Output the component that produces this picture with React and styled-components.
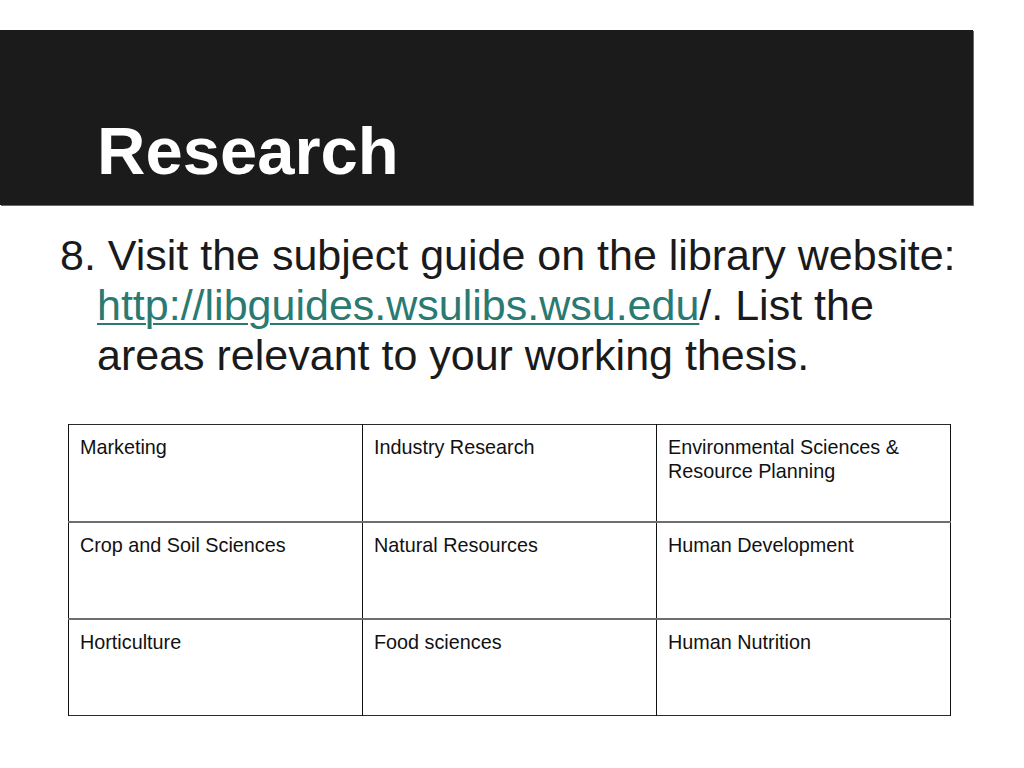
import React from "react";
import styled, { createGlobalStyle } from "styled-components";

const GlobalStyle = createGlobalStyle`
  body {
    margin: 0;
    background: #ffffff;
    font-family: "Liberation Sans", Arial, Helvetica, sans-serif;
  }
`;

const areas = [
  ["Marketing", "Industry Research", "Environmental Sciences & Resource Planning"],
  ["Crop and Soil Sciences", "Natural Resources", "Human Development"],
  ["Horticulture", "Food sciences", "Human Nutrition"],
];

const App = () => {
  return (
    <Slide>
      <GlobalStyle />
      <TitleBar>
        <Title>Research</Title>
      </TitleBar>

      <Body>
        <Step>
          <span>8. Visit the subject guide on the library website: </span>
          <Link href="#">http://libguides.wsulibs.wsu.edu</Link>
          <span>/. List the </span>
          <span>areas relevant to your working thesis.</span>
        </Step>

        <Table>
          <tbody>
            {areas.map((row, i) => (
              <Row key={i}>
                {row.map((area) => (
                  <Cell key={area}>
                    <CellText>{area}</CellText>
                  </Cell>
                ))}
              </Row>
            ))}
          </tbody>
        </Table>
      </Body>
    </Slide>
  );
};

export default App;

const Slide = styled.div`
  width: 1024px;
  height: 768px;
  padding-top: 30px;
  box-sizing: border-box;
  overflow: hidden;
`;

const TitleBar = styled.div`
  width: 973px;
  height: 175px;
  box-sizing: border-box;
  background-color: #1b1b1b;
  box-shadow: 1px 1px 0 #6a6a6a;
  display: flex;
  align-items: flex-end;
  padding: 0 0 21px 97px;
`;

const Title = styled.h1`
  margin: 0;
  color: #ffffff;
  font-size: 67px;
  line-height: 1;
  font-weight: bold;
`;

const Body = styled.div`
  display: flex;
  flex-direction: column;
  padding-left: 60px;
  width: 913px;
`;

const Step = styled.p`
  margin: 25px 0 0;
  padding-left: 37px;
  text-indent: -37px;
  color: #1a1a1a;
  font-size: 43px;
  line-height: 50px;
`;

const Link = styled.a`
  color: #2a7a71;
  text-decoration: underline;
  text-decoration-thickness: 2px;
  text-underline-offset: 3px;
`;

const Table = styled.table`
  margin: 44px 0 0 8px;
  border-collapse: collapse;
  table-layout: fixed;
  width: 883px;
  border: 1px solid #2a2a2a;
`;

const Row = styled.tr`
  height: 97px;
  & + & td {
    border-top: 2px solid #6e6e6e;
  }
`;

const Cell = styled.td`
  vertical-align: top;
  padding: 10px 11px;
  border-left: 1px solid #111111;
  border-right: 1px solid #111111;
`;

const CellText = styled.div`
  color: #111111;
  font-size: 19.8px;
  line-height: 24px;
`;
